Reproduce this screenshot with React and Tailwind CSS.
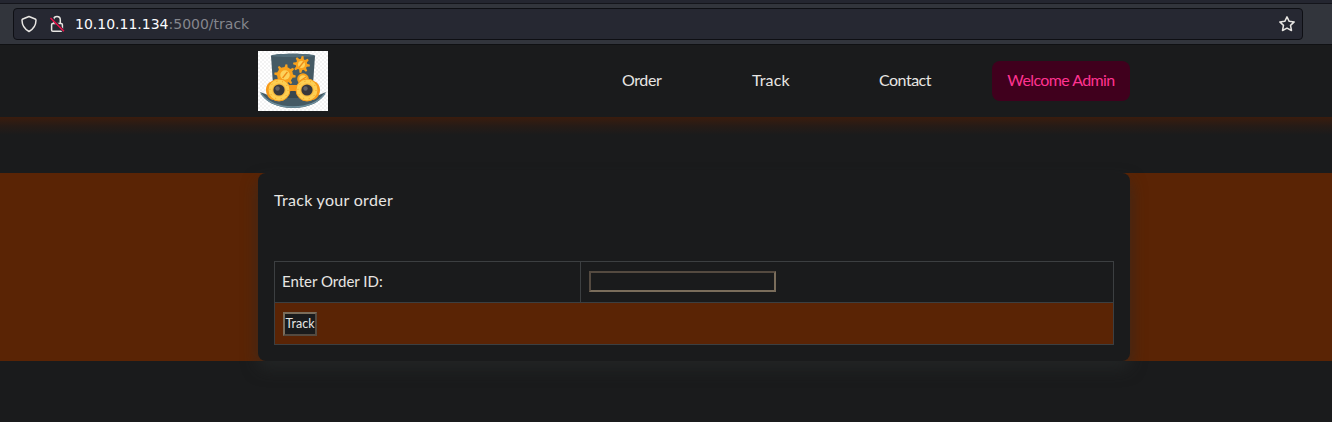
import React from 'react';

function Shield() {
  return (
    <svg className="h-[18px] w-[18px]" viewBox="0 0 18 18" fill="none" stroke="#e8e6e3" strokeWidth="1.5" strokeLinejoin="round">
      <path d="M9 1.500 15.200 4c.6.3.8.7.8 1.300-.1 5-2.300 8.700-7 11.200C4.300 14 2.100 10.300 2 5.300c0-.6.2-1 .8-1.300Z" />
    </svg>
  );
}

function Lock() {
  return (
    <svg className="h-[18px] w-[16px]" viewBox="0 0 16 18" fill="none">
      <rect x="2.600" y="8.500" width="10.800" height="7.800" rx="1.300" stroke="#e8e6e3" strokeWidth="1.500" />
      <path d="M4.700 8.500V4.800a3.300 3.300 0 0 1 6.600 0v3.700" stroke="#e8e6e3" strokeWidth="1.500" />
      <path d="m2 2.500 13 14" stroke="#262832" strokeWidth="2.600" />
      <path d="m1.500 3 13.500 13.300" stroke="#ee124c" strokeWidth="1.500" />
    </svg>
  );
}

function Star() {
  return (
    <svg className="h-[18px] w-[18px]" viewBox="0 0 18 18" fill="none" stroke="#e8e6e3" strokeWidth="1.500" strokeLinejoin="round">
      <path d="m9 1.800 2.200 4.500 5 .6-3.700 3.500 1 5.100L9 13.100l-4.500 2.400 1-5.100-3.700-3.500 5-.6Z" />
    </svg>
  );
}

function Goggle({ cx }) {
  return (
    <g>
      <circle cx={cx} cy="39" r="11" fill="#fdcf52" stroke="#f79a1a" strokeWidth="1" />
      <circle cx={cx} cy="39" r="9" fill="none" stroke="#f79a1a" strokeWidth="1" strokeDasharray="1 4.650" />
      <circle cx={cx} cy="39" r="6.800" fill="#f5b83d" />
      <circle cx={cx} cy="39" r="5.600" fill="#37373a" />
      <circle cx={cx - 1.5} cy="37.500" r="2.200" fill="#626265" />
    </g>
  );
}

const toothAngles = [0, 45, 90, 135, 180, 225, 270, 315];

function Gear({ cx, cy, r }) {
  return (
    <g>
      {toothAngles.map((angle) => (
        <path
          key={angle}
          d={`M${cx - 2} ${cy - r + 3}L${cx - 0.9} ${cy - r - 2.2}h1.800L${cx + 2} ${cy - r + 3}Z`}
          transform={`rotate(${angle + 8} ${cx} ${cy})`}
          fill="#f9a11c"
        />
      ))}
      <circle cx={cx} cy={cy} r={r - 0.5} fill="#f9a11c" />
      <circle cx={cx} cy={cy} r={r * 0.56} fill="#fdd25b" />
      <path d={`M${cx - 2.4} ${cy + 3}l4.800-6`} stroke="#f08c16" strokeWidth="1.300" />
    </g>
  );
}

function HatLogo() {
  return (
    <svg className="h-[60px] w-[70px]" viewBox="0 0 70 60">
      <defs>
        <pattern id="checks" width="4" height="4" patternUnits="userSpaceOnUse">
          <rect width="4" height="4" fill="#ffffff" />
          <path d="M0 0h2v2H0zM2 2h2v2H2z" fill="#f3f3f3" />
        </pattern>
      </defs>
      <rect width="70" height="60" fill="url(#checks)" />
      <path d="M2 41c6 2 10 4 15 5h36c6-1 10-3 15-5-4 9-16 16-33 16S6 50 2 41Z" fill="#455a64" />
      <path d="M3 42.500c7 9.500 18 13.500 32 13.500s25-4 32-13.500" fill="none" stroke="#6f909e" strokeWidth="1.300" />
      <path d="M13 5c0-3 44-3 44 0l-3 43H16Z" fill="#455a64" />
      <path d="M13 5c0-3 44-3 44 0-9 1.500-35 1.500-44 0Z" fill="#546e7a" />
      <path d="M16 34h38l2 13H14Z" fill="#37474f" />
      <Gear cx={27} cy={24} r={8.500} />
      <Gear cx={43.500} cy={13.500} r={6.200} />
      <circle cx="45" cy="28" r="5.800" fill="#f9a11c" />
      <circle cx="45" cy="28" r="3.700" fill="#fdd25b" />
      <path d="m42 30 6-4" stroke="#f08c16" strokeWidth="1.300" />
      <path d="M16 30c-5 0-8 4-8 9s3 9 7 10ZM54 30c5 0 8 4 8 9s-3 9-7 10ZM30 34h10v6H30Z" fill="#f79a1a" />
      <Goggle cx={21} />
      <Goggle cx={49} />
    </svg>
  );
}

export default function App() {
  return (
    <div className="flex h-[422px] w-full flex-col overflow-hidden bg-[#1a1b1c] font-['Lato','Liberation_Sans',sans-serif] text-[16px] leading-6 text-[#e8e6e3]">
      <div className="flex h-[45px] shrink-0 flex-col border-b border-[#101113] bg-[#32353c]">
        <div className="h-1 shrink-0 border-b border-[#14151b] bg-[#242630]" />
        <div className="mt-1 ml-[13px] flex h-8 w-[1290px] items-center rounded-[4px] border border-[#0e0f14] bg-[#262832] px-[6px]">
          <Shield />
          <div className="ml-[11px] flex"><Lock /></div>
          <div className="ml-[10px] font-['DejaVu_Sans',sans-serif] text-[14px] leading-5 text-[#85868d]">
            <span className="text-[#fbfbfe]">10.10.11.134</span>:5000/track
          </div>
          <div className="ml-auto"><Star /></div>
        </div>
      </div>

      <header className="h-[72px] shrink-0 bg-[#1a1b1c] pt-[6px]">
        <nav className="mx-auto flex h-[60px] w-[872px] translate-x-[28px] items-center">
          <HatLogo />
          <a className="ml-[294px] w-[130px] pb-0.5 tracking-[-0.4px]">Order</a>
          <a className="w-[127px] pb-0.5 tracking-[0.1px]">Track</a>
          <a className="w-[113px] pb-0.5 tracking-[-0.5px]">Contact</a>
          <a className="flex h-10 w-[138px] items-center justify-center rounded-lg bg-[#40001d] pb-0.5 tracking-[-0.6px] whitespace-nowrap text-[#ff3391]">Welcome Admin</a>
        </nav>
      </header>
      <div className="h-[18px] shrink-0 bg-linear-to-b from-[#3a1c0d] via-[#261b16] to-[#1a1b1c]" />

      <main className="mt-[38px] h-[188px] shrink-0 bg-[#5a2405]">
        <section className="mx-auto h-[188px] w-[872px] translate-x-[28px] rounded-lg bg-[#1a1b1c] px-4 pt-[15px] shadow-[0_8px_16px_rgba(40,44,43,0.6)]">
          <h1 className="text-[16px] leading-6 tracking-[0.3px]">Track your order</h1>
          <div className="mt-[49px] border border-[#3c3f41]">
            <div className="flex h-[41px] border-b border-[#3c3f41]">
              <div className="flex w-[306px] items-center border-r border-[#3c3f41] pb-0.5 pl-[7px] text-[15px]">Enter Order ID:</div>
              <div className="flex items-center pb-px pl-2">
                <input aria-label="Order ID" className="h-[21px] w-[187px] border-2 border-t-[#544a40] border-r-[#7a6d5b] border-b-[#7a6d5b] border-l-[#544a40] bg-[#1a1b1c]" />
              </div>
            </div>
            <div className="flex h-[41px] items-center bg-[#5a2405] pl-2">
              <button className="flex h-6 w-[34px] items-center justify-center border-2 border-t-[#7a6d5b] border-r-[#544a40] border-b-[#544a40] border-l-[#7a6d5b] bg-[#1a1b1c] text-[12.500px]">Track</button>
            </div>
          </div>
        </section>
      </main>
    </div>
  );
}
